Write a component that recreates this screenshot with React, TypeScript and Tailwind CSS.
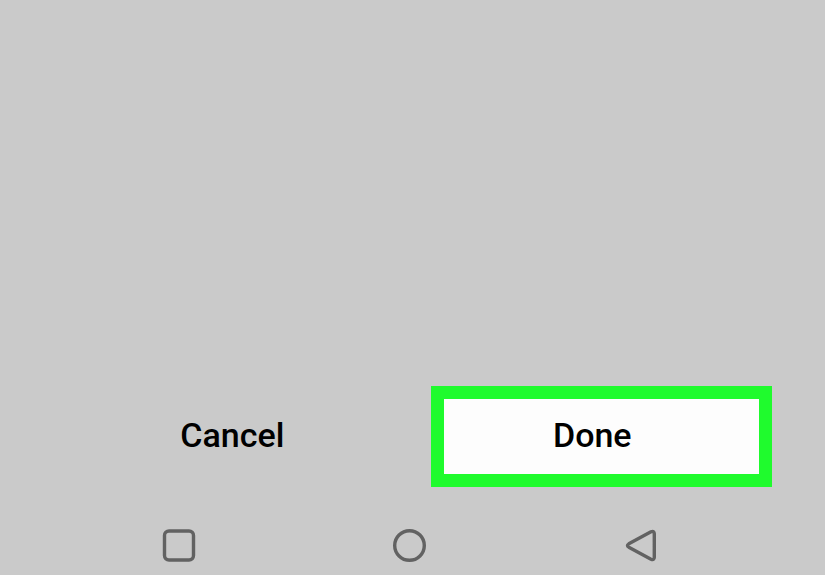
import type { ReactNode } from "react";

interface NavButtonProps {
  label: string;
  children: ReactNode;
}

function NavButton({ label, children }: NavButtonProps) {
  return (
    <button type="button" aria-label={label} className="flex h-10 w-10 items-center justify-center">
      <svg
        viewBox="0 0 40 40"
        className="h-10 w-10"
        fill="none"
        stroke="#626262"
        strokeWidth="3.4"
        strokeLinejoin="round"
      >
        {children}
      </svg>
    </button>
  );
}

export default function App() {
  return (
    <div className="flex min-h-screen flex-col justify-end bg-[#cacaca] font-['Roboto',sans-serif] text-black">
      {/* Dialog actions */}
      <div className="grid grid-cols-[430fr_341fr] pr-[53px] text-[34px] leading-10 font-medium">
        <button type="button" className="pb-1 pl-[34px] text-center">
          Cancel
        </button>
        <button
          type="button"
          className="h-[101px] border-[13px] border-[#1ffb2d] bg-[#fdfdfd] pr-[18px] pb-1 text-center"
        >
          Done
        </button>
      </div>

      {/* System navigation */}
      <nav className="flex justify-between pt-[38px] pr-[165px] pb-[10px] pl-[159px]">
        <NavButton label="Recent apps">
          <rect x="5.5" y="6" width="29" height="29" rx="4.5" />
        </NavButton>
        <NavButton label="Home">
          <circle cx="19.5" cy="20.5" r="14.8" />
        </NavButton>
        <NavButton label="Back">
          <path d="M31 6.8 8.8 18.8Q6.2 20.5 8.8 22.2L31 34.2Q34.3 35.6 34.3 32.2V8.8Q34.3 5.4 31 6.8Z" />
        </NavButton>
      </nav>
    </div>
  );
}
